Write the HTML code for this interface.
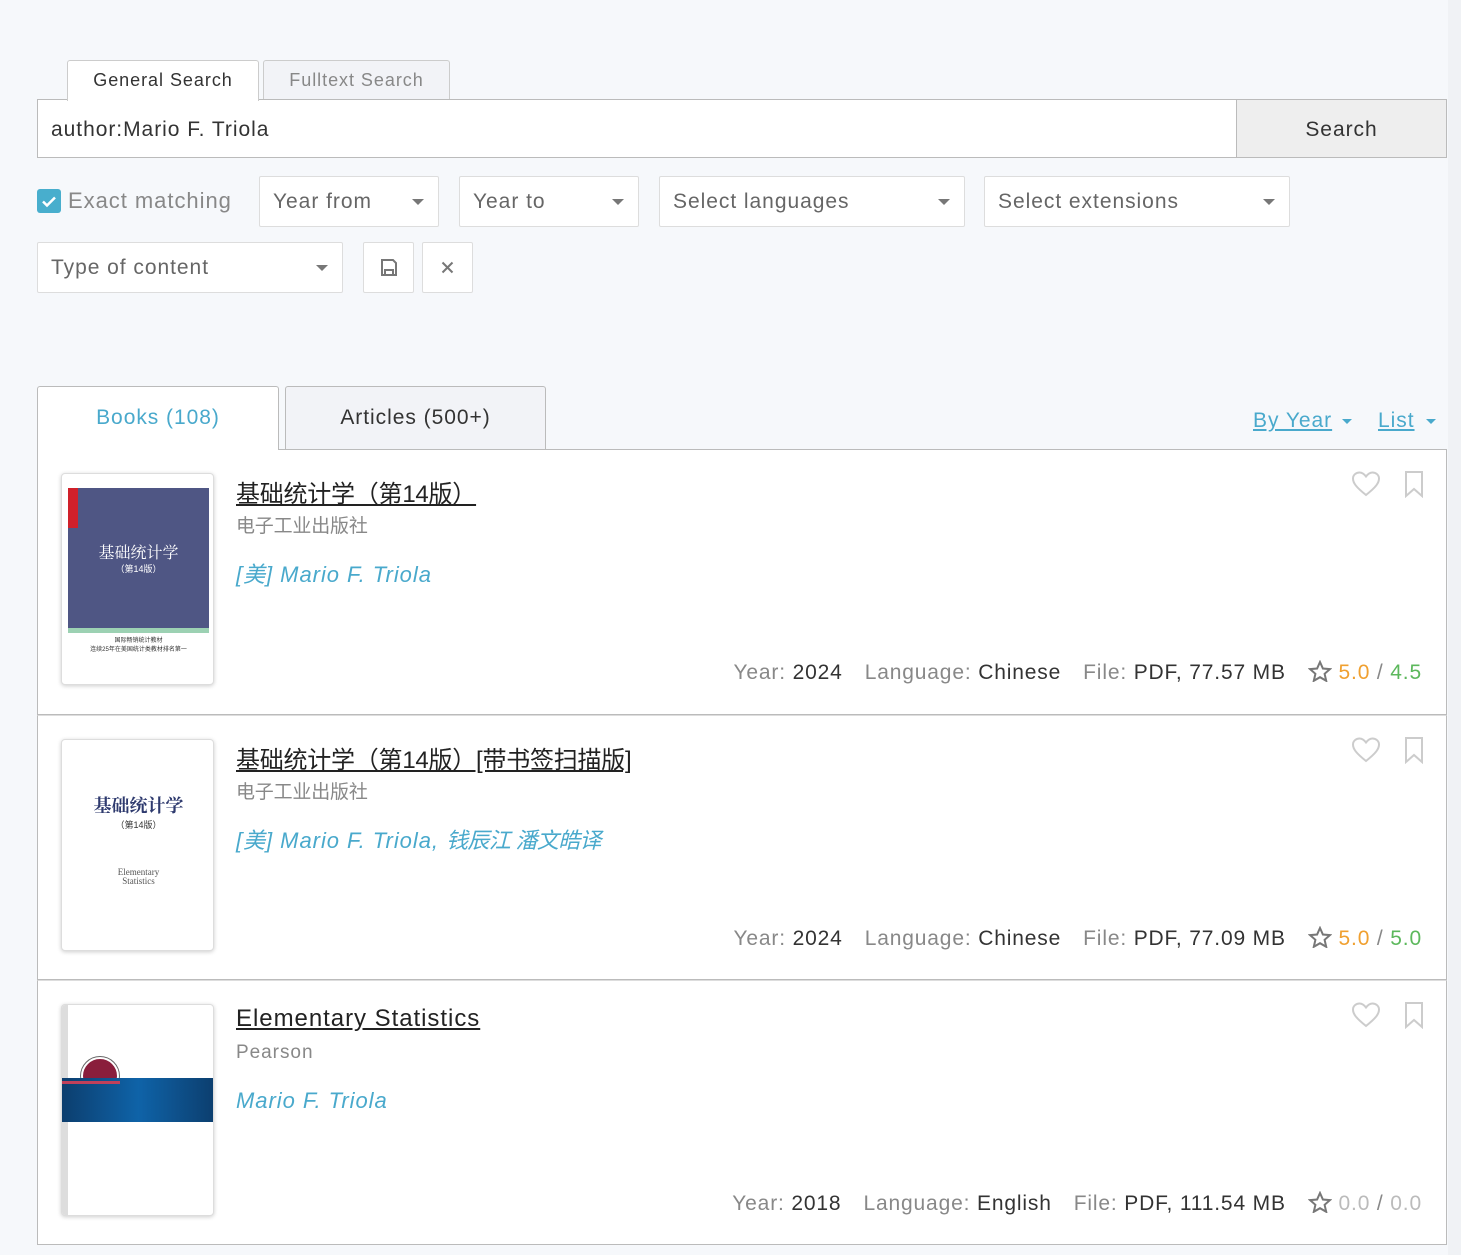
<!DOCTYPE html>
<html><head><meta charset="utf-8"><style>
*{box-sizing:border-box;margin:0;padding:0}
body{width:1461px;height:1255px;background:#f6f8fb;font-family:"Liberation Sans","Noto Sans CJK SC",sans-serif;position:relative;overflow:hidden;color:#333;letter-spacing:0.06em}
.a{position:absolute}
.box{position:absolute;background:#fff;border:1px solid #ddd;border-radius:2px;font-size:21px;color:#666;padding-left:13px;line-height:50px}
.car{position:absolute;right:14px;top:22px;border-left:6px solid transparent;border-right:6px solid transparent;border-top:6px solid #777}
.item{position:absolute;left:37px;width:1410px;height:265px;background:#fff;border:1px solid #bbb;border-top:none}
.cover{position:absolute;left:23px;top:23px;width:153px;height:212px;border:1px solid #ddd;border-radius:4px;box-shadow:0 1px 4px rgba(0,0,0,.2);overflow:hidden;background:#fff;letter-spacing:0}
.title{position:absolute;left:198px;top:24px;font-size:24px;color:#222;text-decoration:underline}
.zh{letter-spacing:-0.01em}
.pub{position:absolute;left:198px;top:61px;font-size:19px;color:#888}
.auth{position:absolute;left:198px;top:107px;font-size:22px;color:#49a9cc;font-style:italic}
.meta{position:absolute;right:24px;top:210px;font-size:21px;color:#888;white-space:nowrap;letter-spacing:0.04em}
.meta b{font-weight:normal;color:#333}
.meta span{margin-left:22px}
.ic{position:absolute;top:20px}
</style></head><body>
<div class="a" style="left:1448px;top:0;width:13px;height:1255px;background:#f0f2f5"></div>
<div class="a" style="left:67px;top:60px;width:192px;height:41px;background:#fff;border:1px solid #ccc;border-bottom:none;border-radius:3px 3px 0 0;font-size:18px;line-height:38px;text-align:center;color:#333;z-index:2">General Search</div>
<div class="a" style="left:263px;top:60px;width:187px;height:40px;background:#f2f3f7;border:1px solid #ccc;border-bottom:none;border-radius:3px 3px 0 0;font-size:18px;line-height:38px;text-align:center;color:#888">Fulltext Search</div>
<div class="a" style="left:37px;top:99px;width:1200px;height:59px;background:#fff;border:1px solid #bbb;font-size:21px;line-height:59px;padding-left:13px;color:#333">author:Mario F. Triola</div>
<div class="a" style="left:1236px;top:99px;width:211px;height:59px;background:#eee;border:1px solid #bbb;font-size:21px;line-height:59px;text-align:center;color:#333">Search</div>
<div class="a" style="left:37px;top:189px;width:24px;height:24px;background:#48aecd;border-radius:3px"><svg width="24" height="24"><path d="M6 12.5l4 4 8-8" stroke="#fff" stroke-width="2.5" fill="none"/></svg></div>
<div class="a" style="left:68px;top:188px;font-size:22px;color:#888">Exact matching</div>
<div class="box" style="left:259px;top:176px;width:180px;height:51px">Year from<i class="car"></i></div>
<div class="box" style="left:459px;top:176px;width:180px;height:51px">Year to<i class="car"></i></div>
<div class="box" style="left:659px;top:176px;width:306px;height:51px">Select languages<i class="car"></i></div>
<div class="box" style="left:984px;top:176px;width:306px;height:51px">Select extensions<i class="car"></i></div>
<div class="box" style="left:37px;top:242px;width:306px;height:51px">Type of content<i class="car"></i></div>
<div class="box" style="left:363px;top:242px;width:51px;height:51px;padding:0"><svg width="49" height="49"><path d="M18 17h11l3 3v12H18z" stroke="#777" stroke-width="2" fill="none"/><path d="M21 32v-5h8v5" stroke="#777" stroke-width="2" fill="none"/></svg></div>
<div class="box" style="left:422px;top:242px;width:51px;height:51px;padding:0"><svg width="49" height="49"><path d="M19.5 19.5l10 10M29.5 19.5l-10 10" stroke="#777" stroke-width="2"/></svg></div>
<div class="a" style="left:37px;top:386px;width:242px;height:64px;background:#fff;border:1px solid #bbb;border-bottom:none;border-radius:3px 3px 0 0;font-size:21px;line-height:62px;text-align:center;color:#49a9cc;z-index:2">Books (108)</div>
<div class="a" style="left:285px;top:386px;width:261px;height:63px;background:#f2f3f7;border:1px solid #bbb;border-bottom:none;border-radius:3px 3px 0 0;font-size:21px;line-height:62px;text-align:center;color:#333">Articles (500+)</div>
<div class="a" style="left:1253px;top:409px;font-size:21px;color:#49a9cc;text-decoration:underline">By Year</div>
<div class="a" style="left:1342px;top:419px;border-left:5px solid transparent;border-right:5px solid transparent;border-top:5px solid #49a9cc"></div>
<div class="a" style="left:1378px;top:409px;font-size:21px;color:#49a9cc;text-decoration:underline">List</div>
<div class="a" style="left:1426px;top:419px;border-left:5px solid transparent;border-right:5px solid transparent;border-top:5px solid #49a9cc"></div>
<div class="a" style="left:37px;top:449px;width:1410px;height:1px;background:#bbb"></div>

<div class="item" style="top:450px">
<div class="cover"><div style="position:absolute;left:6px;top:14px;width:141px;height:140px;background:#4f5684"></div><div style="position:absolute;left:6px;top:14px;width:10px;height:40px;background:#d0202a"></div><div style="position:absolute;left:6px;top:154px;width:141px;height:5px;background:#9cd1b3"></div><div style="position:absolute;left:0;top:66px;width:153px;text-align:center;color:#fff;font-family:'Noto Serif CJK SC',serif;font-size:16px">基础统计学</div><div style="position:absolute;left:0;top:88px;width:153px;text-align:center;color:#fff;font-size:9px">（第14版）</div><div style="position:absolute;left:0;top:163px;width:153px;text-align:center;color:#333;font-size:6px;line-height:9px">国际畅销统计教材<br>连续25年在美国统计类教材排名第一</div></div>
<div class="title zh">基础统计学（第14版）</div>
<div class="pub zh">电子工业出版社</div>
<div class="auth">[美] Mario F. Triola</div>
<svg class="ic" style="left:1313px" width="30" height="28"><path d="M15 25C5 17 2 13 2 8.5 2 5 5 2.5 8.5 2.5 11.5 2.5 13.5 4.5 15 6.5 16.5 4.5 18.5 2.5 21.5 2.5 25 2.5 28 5 28 8.5 28 13 25 17 15 25z" stroke="#ccc" stroke-width="2" fill="none"/></svg>
<svg class="ic" style="left:1366px" width="20" height="28"><path d="M2 2h16v24l-8-7-8 7z" stroke="#ccc" stroke-width="2" fill="none"/></svg>
<div class="meta">Year: <b>2024</b><span>Language: <b>Chinese</b></span><span>File: <b>PDF, 77.57 MB</b></span><span><svg width="24" height="22" style="vertical-align:-3px"><path d="M12 2l2.9 6.5 7 .6-5.3 4.7 1.6 7L12 17.2 5.8 20.8l1.6-7L2.1 9.1l7-.6z" stroke="#777" stroke-width="2" fill="none"/></svg> <i style="font-style:normal;color:#f0a030">5.0</i> / <i style="font-style:normal;color:#5cb85c">4.5</i></span></div>
</div>

<div class="item" style="top:715px;border-top:1px solid #ddd">
<div class="cover"><div style="position:absolute;left:0;top:52px;width:153px;text-align:center;color:#2e3a6e;font-family:'Noto Serif CJK SC',serif;font-size:18px;font-weight:bold">基础统计学</div><div style="position:absolute;left:0;top:78px;width:153px;text-align:center;color:#333;font-size:9px">（第14版）</div><div style="position:absolute;left:0;top:128px;width:153px;text-align:center;color:#555;font-family:'Liberation Serif',serif;font-size:9px;line-height:9px">Elementary<br>Statistics</div></div>
<div class="title zh">基础统计学（第14版）[带书签扫描版]</div>
<div class="pub zh">电子工业出版社</div>
<div class="auth">[美] Mario F. Triola, <span style="letter-spacing:-0.03em">钱辰江 潘文皓译</span></div>
<svg class="ic" style="left:1313px" width="30" height="28"><path d="M15 25C5 17 2 13 2 8.5 2 5 5 2.5 8.5 2.5 11.5 2.5 13.5 4.5 15 6.5 16.5 4.5 18.5 2.5 21.5 2.5 25 2.5 28 5 28 8.5 28 13 25 17 15 25z" stroke="#ccc" stroke-width="2" fill="none"/></svg>
<svg class="ic" style="left:1366px" width="20" height="28"><path d="M2 2h16v24l-8-7-8 7z" stroke="#ccc" stroke-width="2" fill="none"/></svg>
<div class="meta">Year: <b>2024</b><span>Language: <b>Chinese</b></span><span>File: <b>PDF, 77.09 MB</b></span><span><svg width="24" height="22" style="vertical-align:-3px"><path d="M12 2l2.9 6.5 7 .6-5.3 4.7 1.6 7L12 17.2 5.8 20.8l1.6-7L2.1 9.1l7-.6z" stroke="#777" stroke-width="2" fill="none"/></svg> <i style="font-style:normal;color:#f0a030">5.0</i> / <i style="font-style:normal;color:#5cb85c">5.0</i></span></div>
</div>

<div class="item" style="top:980px;border-top:1px solid #ddd">
<div class="cover"><div style="position:absolute;left:0;top:0;width:6px;height:212px;background:#ddd"></div><div style="position:absolute;left:19px;top:52px;width:38px;height:38px;border-radius:50%;background:#8a1e3c;border:2px solid #fff;box-shadow:0 0 0 1px #666"></div><div style="position:absolute;left:0;top:73px;width:153px;height:44px;background:linear-gradient(90deg,#0c3e6e,#0f63a8 50%,#0c3e6e)"></div><div style="position:absolute;left:0;top:76px;width:58px;height:3px;background:#c0405a"></div></div>
<div class="title">Elementary Statistics</div>
<div class="pub">Pearson</div>
<div class="auth">Mario F. Triola</div>
<svg class="ic" style="left:1313px" width="30" height="28"><path d="M15 25C5 17 2 13 2 8.5 2 5 5 2.5 8.5 2.5 11.5 2.5 13.5 4.5 15 6.5 16.5 4.5 18.5 2.5 21.5 2.5 25 2.5 28 5 28 8.5 28 13 25 17 15 25z" stroke="#ccc" stroke-width="2" fill="none"/></svg>
<svg class="ic" style="left:1366px" width="20" height="28"><path d="M2 2h16v24l-8-7-8 7z" stroke="#ccc" stroke-width="2" fill="none"/></svg>
<div class="meta">Year: <b>2018</b><span>Language: <b>English</b></span><span>File: <b>PDF, 111.54 MB</b></span><span><svg width="24" height="22" style="vertical-align:-3px"><path d="M12 2l2.9 6.5 7 .6-5.3 4.7 1.6 7L12 17.2 5.8 20.8l1.6-7L2.1 9.1l7-.6z" stroke="#777" stroke-width="2" fill="none"/></svg> <i style="font-style:normal;color:#bbb">0.0</i> / <i style="font-style:normal;color:#bbb">0.0</i></span></div>
</div>
</body></html>
